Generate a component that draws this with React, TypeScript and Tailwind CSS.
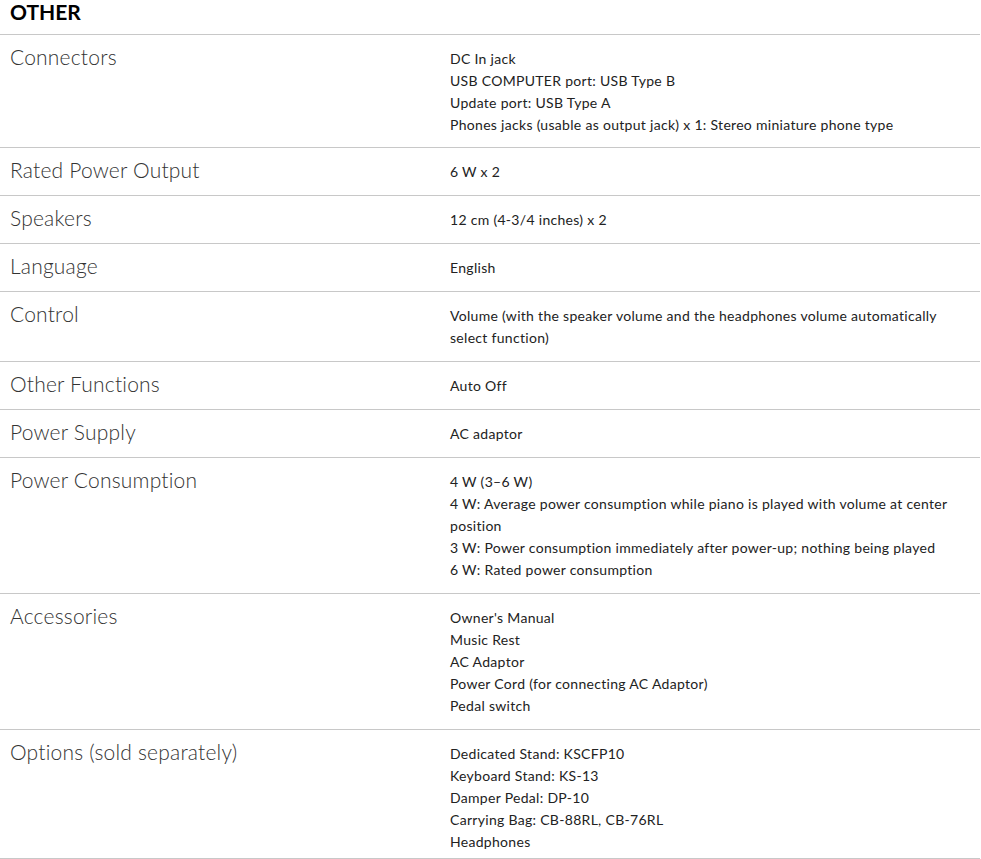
import React from "react";

const rows: { label: string; values: string[] }[] = [
  {
    label: "Connectors",
    values: [
      "DC In jack",
      "USB COMPUTER port: USB Type B",
      "Update port: USB Type A",
      "Phones jacks (usable as output jack) x 1: Stereo miniature phone type",
    ],
  },
  { label: "Rated Power Output", values: ["6 W x 2"] },
  { label: "Speakers", values: ["12 cm (4-3/4 inches) x 2"] },
  { label: "Language", values: ["English"] },
  {
    label: "Control",
    values: [
      "Volume (with the speaker volume and the headphones volume automatically select function)",
    ],
  },
  { label: "Other Functions", values: ["Auto Off"] },
  { label: "Power Supply", values: ["AC adaptor"] },
  {
    label: "Power Consumption",
    values: [
      "4 W (3–6 W)",
      "4 W: Average power consumption while piano is played with volume at center position",
      "3 W: Power consumption immediately after power-up; nothing being played",
      "6 W: Rated power consumption",
    ],
  },
  {
    label: "Accessories",
    values: [
      "Owner's Manual",
      "Music Rest",
      "AC Adaptor",
      "Power Cord (for connecting AC Adaptor)",
      "Pedal switch",
    ],
  },
  {
    label: "Options (sold separately)",
    values: [
      "Dedicated Stand: KSCFP10",
      "Keyboard Stand: KS-13",
      "Damper Pedal: DP-10",
      "Carrying Bag: CB-88RL, CB-76RL",
      "Headphones",
    ],
  },
];

function SpecRow({ label, values, pb }: { label: string; values: string[]; pb: string }) {
  return (
    <div className="grid grid-cols-[450px_1fr] border-b border-[#c8c8c8]">
      <div className="pl-[10px] pt-[8px] text-[21px] leading-[28px] font-light tracking-[0.2px] text-[#333]">
        {label}
      </div>
      <div className={"pt-[13px] pr-[20px] text-[14px] leading-[22px] tracking-[0.3px] text-[#222] " + pb}>
        {values.map((v) => (
          <div key={v}>{v}</div>
        ))}
      </div>
    </div>
  );
}

export default function App() {
  return (
    <div className="w-[980px] bg-white" style={{ fontFamily: "Lato, 'Liberation Sans', sans-serif" }}>
      <div className="h-[35px] border-b border-[#c8c8c8] pl-[10px]">
        <h2 className="text-[21px] leading-[24px] font-bold text-black">OTHER</h2>
      </div>
      {rows.map((r, i) => (
        <SpecRow
          key={r.label}
          label={r.label}
          values={r.values}
          pb={i === 0 ? "pb-[11px]" : i === rows.length - 1 ? "pb-[5px]" : "pb-[12px]"}
        />
      ))}
    </div>
  );
}
